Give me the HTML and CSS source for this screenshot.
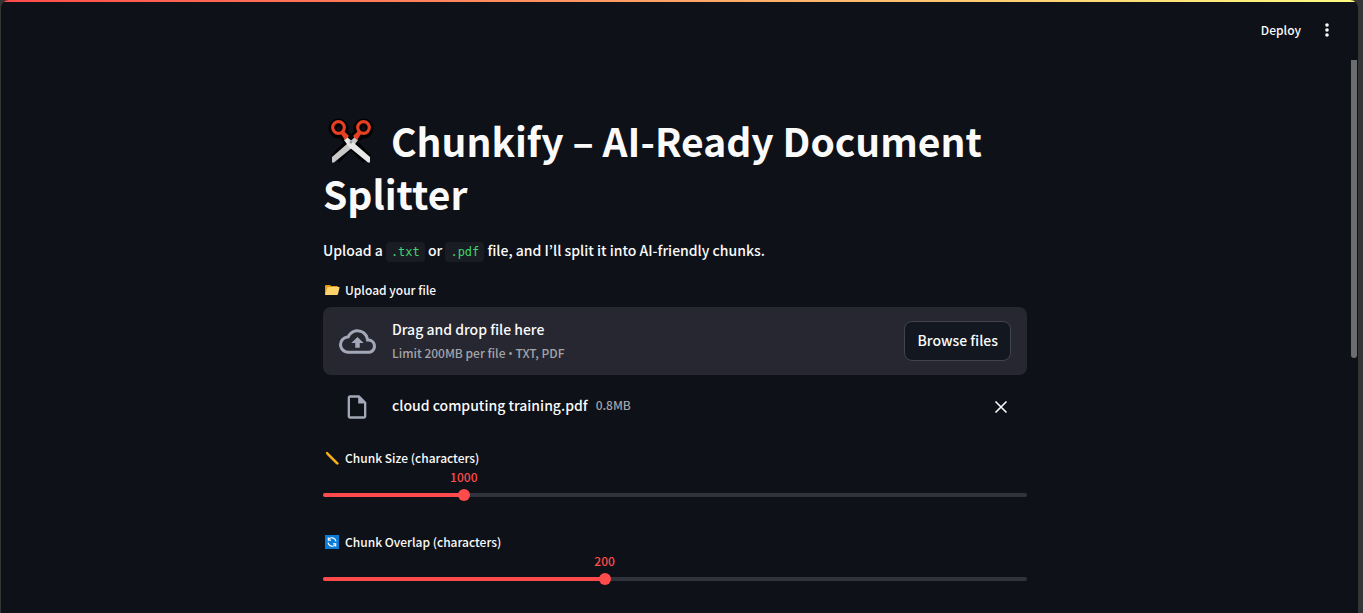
FILE: index.html
```html
<!DOCTYPE html>
<html lang="en">
<head>
<meta charset="utf-8">
<meta name="viewport" content="width=device-width, initial-scale=1">
<title>Chunkify</title>
<link rel="stylesheet" href="styles.css">
</head>
<body>
<div class="app">
  <div class="decoration"></div>
  <header class="toolbar">
    <button class="deploy" type="button">Deploy</button>
    <button class="menu" type="button" aria-label="Main menu">
      <svg width="20" height="20" viewBox="0 0 20 20" fill="#fafafa"><circle cx="10" cy="5" r="1.800"/><circle cx="10" cy="10" r="1.800"/><circle cx="10" cy="15" r="1.800"/></svg>
    </button>
  </header>
  <main class="content">
    <h1 class="title"><svg class="title-icon" viewBox="0 0 48 48" aria-hidden="true">
        <g fill="none" stroke="#000" stroke-linejoin="round">
          <circle cx="11.500" cy="11.500" r="6" stroke-width="8"/><circle cx="36.500" cy="11.500" r="6" stroke-width="8"/>
          <path d="M16 17 40 42M32 17 8 42" stroke-width="11"/>
        </g>
        <path d="M28 20 5 40v5.500h2L26 30l5-7z" fill="#c8c8c8"/>
        <path d="M20 20 43 40v5.500h-2L22 30l-5-7z" fill="#e8e8e8"/>
        <g fill="none" stroke="#e63f21" stroke-width="3.200"><circle cx="11.500" cy="10.500" r="5.800"/><circle cx="36.500" cy="10.500" r="5.800"/></g>
        <path d="m14 17 3-3 5 5-4 4zM34 17l-3-3-5 5 4 4z" fill="#e63f21"/>
        <circle cx="24" cy="25" r="1.500" fill="#999"/>
      </svg>Chunkify – AI-Ready Document Splitter</h1>
    <p class="intro">Upload a <code>.txt</code> or <code>.pdf</code> file, and I’ll split it into AI-friendly chunks.</p>

    <section class="uploader">
      <label class="label" for="browse">
        <svg class="emoji" viewBox="0 0 16 16" aria-hidden="true"><path d="M1 4q0-1 1-1h4l1 1h6q1 0 1 1v7H1z" fill="#e99a0c"/><path d="M3.500 5H15q.7 0 .5.8L14 12q-.2 1-1 1H1z" fill="#ffd36b"/></svg>
        Upload your file
      </label>
      <div class="dropzone">
        <svg class="cloud" viewBox="0 0 24 24" fill="#a3a8b8" aria-hidden="true"><path d="M19.350 10.040A7.490 7.490 0 0 0 12 4C9.110 4 6.600 5.640 5.350 8.040A5.994 5.994 0 0 0 0 14c0 3.310 2.690 6 6 6h13c2.760 0 5-2.240 5-5 0-2.640-2.050-4.780-4.650-4.960zM19 18H6c-2.210 0-4-1.790-4-4 0-2.050 1.530-3.760 3.560-3.970l1.070-.11.5-.95A5.469 5.469 0 0 1 12 6c2.620 0 4.880 1.860 5.390 4.430l.3 1.500 1.530.11A2.980 2.980 0 0 1 22 15c0 1.650-1.350 3-3 3zM8 13h2.550v3h2.900v-3H16l-4-4z"/></svg>
        <div class="drop-text">
          <span class="drop-main">Drag and drop file here</span>
          <span class="small">Limit 200MB per file <span class="bullet">•</span> TXT, PDF</span>
        </div>
        <button class="browse" id="browse" type="button">Browse files</button>
      </div>
      <div class="file">
        <svg class="file-icon" viewBox="0 0 24 24" fill="#a3a8b8" aria-hidden="true"><path d="M14 2H6c-1.100 0-2 .9-2 2v16c0 1.100.9 2 2 2h12c1.100 0 2-.9 2-2V8zM6 20V4h7v5h5v11z"/></svg>
        <span class="file-name">cloud computing training.pdf</span>
        <span class="small">0.8MB</span>
        <button class="remove" type="button" aria-label="Remove file">
          <svg width="20" height="20" viewBox="0 0 20 20" fill="none" stroke="#fafafa" stroke-width="1.600"><path d="m4.500 4.500 11 11m0-11-11 11"/></svg>
        </button>
      </div>
    </section>

    <section class="field">
      <label class="label" for="size">
        <svg class="emoji" viewBox="0 0 16 16" aria-hidden="true"><path d="m3 3 10.500 10.500" stroke="#f7b51b" stroke-width="2.400" stroke-linecap="round"/><path d="m2.500 4.500 10 10" stroke="#c98208" stroke-width=".6"/></svg>
        Chunk Size (characters)
      </label>
      <div class="slider">
        <output class="value" for="size" style="left:20%">1000</output>
        <div class="track"><div class="fill" style="width:20%"></div></div>
        <input class="range" id="size" type="range" min="0" max="100" value="20">
      </div>
    </section>

    <section class="field">
      <label class="label" for="overlap">
        <svg class="emoji" viewBox="0 0 16 16" aria-hidden="true"><path d="M1 1h14v14H1z" fill="#0a7bd6"/><g fill="none" stroke="#fff" stroke-width="1.200"><path d="M5 4.900a4.200 4.200 0 0 1 7 2.600M11 11.100a4.200 4.200 0 0 1-7-2.600"/><path d="M4.300 3.500v2.700H7M11.700 12.500V9.800H9"/></g></svg>
        Chunk Overlap (characters)
      </label>
      <div class="slider">
        <output class="value" for="overlap" style="left:40%">200</output>
        <div class="track"><div class="fill" style="width:40%"></div></div>
        <input class="range" id="overlap" type="range" min="0" max="500" value="200">
      </div>
    </section>
  </main>
  <div class="scroll-thumb"></div>
</div>
</body>
</html>
```
FILE: styles.css
```css
* { box-sizing: border-box; }
html, body { height: 100%; }
body {
  margin: 0;
  padding: 0 5px 0 1px;
  overflow: hidden;
  background: #353535;
  color: #fafafa;
  font: 500 14px/24px "Noto Sans CJK KR", "Noto Sans", sans-serif;
}
button {
  padding: 0;
  border: 0;
  background: none;
  color: inherit;
  font: inherit;
  cursor: pointer;
}
.app {
  position: relative;
  min-height: 100%;
  padding-right: 9px;
  overflow: hidden;
  border-radius: 8px 8px 0 0;
  background: #0e1117;
}
.decoration {
  height: 2px;
  margin-right: -9px;
  background: linear-gradient(90deg, #ff4b4b, #fffd80);
}
.toolbar {
  display: flex;
  justify-content: flex-end;
  align-items: center;
  gap: 16px;
  height: 56px;
  padding-right: 12px;
}
.deploy { padding-bottom: 1px; font-size: 12px; }
.menu, .remove { display: flex; }
.content {
  width: 100%;
  max-width: 736px;
  margin: 0 auto;
  padding: 56px 16px 24px;
}
.title {
  margin: 0 0 18px;
  font-size: 39px;
  line-height: 53px;
  font-weight: 700;
}
.title-icon {
  width: 48px;
  height: 48px;
  margin: 0 16px 0 4px;
  vertical-align: -8px;
}
.intro { margin: 0 0 16px; }
code {
  padding: 3px 5px;
  border-radius: 4px;
  background: #1a1c24;
  color: #3dd56d;
  font: 12px "DejaVu Sans Mono", monospace;
}
.label {
  display: flex;
  align-items: center;
  gap: 5px;
  margin-bottom: 5px;
  font-size: 12px;
  line-height: 24px;
}
.emoji { width: 16px; height: 16px; margin-left: 1px; }
.dropzone {
  display: flex;
  align-items: center;
  gap: 16px;
  padding: 10px 16px;
  border-radius: 8px;
  background: #262730;
}
.cloud { width: 37px; height: 37px; }
.drop-text { display: flex; flex: 1; flex-direction: column; }
.small { color: #a3a4a9; font-size: 12px; }
.bullet { font-family: "Open Sans", sans-serif; line-height: 1; }
.browse {
  height: 40px;
  padding: 0 12px 2px;
  border: 1px solid #41444c;
  border-radius: 8px;
  background: #131720;
}
.file {
  display: flex;
  align-items: flex-start;
  gap: 8px;
  padding: 18px 16px 25px 20px;
}
.file-icon { width: 28px; height: 28px; margin-right: 13px; }
.remove { margin-left: auto; padding: 4px 0; }
.field { margin-bottom: 33px; }
.field .label { margin: 0; }
.slider { position: relative; padding-top: 23px; }
.value {
  position: absolute;
  top: -5px;
  transform: translateX(-50%);
  color: #ff4b4b;
  font-size: 12px;
}
.track {
  height: 4px;
  border-radius: 4px;
  background: #31333c;
}
.fill { height: 100%; border-radius: 4px; background: #ff4b4b; }
.range {
  position: absolute;
  bottom: -4px;
  left: -6px;
  width: calc(100% + 12px);
  height: 12px;
  margin: 0;
  appearance: none;
  background: transparent;
}
.range::-webkit-slider-thumb {
  width: 12px;
  height: 12px;
  appearance: none;
  border-radius: 50%;
  background: #ff4b4b;
}
.scroll-thumb {
  position: absolute;
  top: 60px;
  right: 1px;
  width: 6px;
  height: 298px;
  border-radius: 0 0 3px 3px;
  background: #6b6d70;
}
```
